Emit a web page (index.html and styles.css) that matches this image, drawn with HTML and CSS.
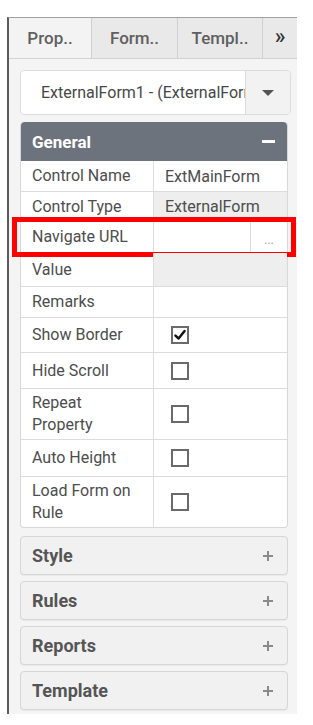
FILE: index.html
```html
<!DOCTYPE html>
<html>
<head>
<meta charset="utf-8">
<link rel="stylesheet" href="styles.css">
</head>
<body>
<div class="frame">
  <div class="tabs">
    <div class="tab tab-active tab-prop">Prop..</div>
    <div class="tab tab-form">Form..</div>
    <div class="tab tab-templ">Templ..</div>
    <div class="tab tab-more">&raquo;</div>
  </div>
  <div class="content">
    <div class="select">
      <div class="select-text">ExternalForm1 - (ExternalForm)</div>
      <div class="select-btn"><span class="caret"></span></div>
    </div>

    <div class="panel panel-open">
      <div class="panel-head">
        <span class="panel-title">General</span>
        <span class="minus"></span>
      </div>
      <div class="rows">
        <div class="row h31"><div class="label">Control Name</div><div class="value">ExtMainForm</div></div>
        <div class="row h30"><div class="label">Control Type</div><div class="value value-gray">ExternalForm</div></div>
        <div class="row h31 row-hl">
          <div class="label">Navigate URL</div>
          <div class="value value-split"><div class="url-input"></div><div class="url-btn">...</div></div>
          <div class="highlight"></div>
        </div>
        <div class="row h34"><div class="label">Value</div><div class="value value-gray"></div></div>
        <div class="row h31"><div class="label">Remarks</div><div class="value"></div></div>
        <div class="row h35"><div class="label">Show Border</div><div class="value"><span class="check checked"><svg viewBox="0 0 16 16" width="16" height="16"><path d="M2.8 8.6 L6.4 12 L13.2 3.4" fill="none" stroke="#111" stroke-width="2.8" stroke-linecap="round" stroke-linejoin="round"/></svg></span></div></div>
        <div class="row h36"><div class="label">Hide Scroll</div><div class="value"><span class="check"></span></div></div>
        <div class="row h51"><div class="label">Repeat<br>Property</div><div class="value"><span class="check"></span></div></div>
        <div class="row h37"><div class="label">Auto Height</div><div class="value"><span class="check"></span></div></div>
        <div class="row h50 row-last"><div class="label">Load Form on<br>Rule</div><div class="value"><span class="check"></span></div></div>
      </div>
    </div>

    <div class="panel panel-closed"><span class="closed-title">Style</span><span class="plus"></span></div>
    <div class="panel panel-closed"><span class="closed-title">Rules</span><span class="plus"></span></div>
    <div class="panel panel-closed"><span class="closed-title">Reports</span><span class="plus"></span></div>
    <div class="panel panel-closed"><span class="closed-title">Template</span><span class="plus"></span></div>
  </div>
</div>
</body>
</html>
```
FILE: styles.css
```css
html, body {
  margin: 0;
  padding: 0;
  background: #ffffff;
}
body {
  font-family: Roboto, "Liberation Sans", sans-serif;
  color: #4d4d4d;
  width: 313px;
  height: 725px;
  overflow: hidden;
}
.frame {
  margin-top: 17px;
  margin-left: 7px;
  width: 288px;
  height: 696px;
  border-left: 2px solid #5a5a5a;
  border-top: 1px solid #a0a0a0;
  background: #f4f4f4;
}
.tabs {
  display: flex;
  height: 40px;
  border-bottom: 1px solid #d2d2d2;
  background: #e9e9e9;
}
.tab {
  box-sizing: border-box;
  display: flex;
  align-items: center;
  justify-content: center;
  font-size: 17px;
  font-weight: 500;
  color: #5f5f5f;
  border-right: 1px solid #d0d0d0;
}
.tab-active { background: #f3f3f3; }
.tab-prop { width: 83px; }
.tab-form { width: 86px; }
.tab-templ { width: 85px; }
.tab-more { width: 34px; border-right: none; font-size: 22px; color: #333; padding-bottom: 3px; }

.content {
  padding: 11px 6px 0 11px;
  display: flex;
  flex-direction: column;
}
.select {
  display: flex;
  height: 45px;
  box-sizing: border-box;
  border: 1px solid #dcdcdc;
  border-radius: 4px;
  background: #fff;
  overflow: hidden;
}
.select-text {
  width: 224px;
  padding-left: 20px;
  box-sizing: border-box;
  white-space: nowrap;
  overflow: hidden;
  font-size: 16px;
  line-height: 43px;
  color: #474747;
}
.select-btn {
  flex: 1;
  border-left: 1px solid #dcdcdc;
  background: #f2f2f2;
  display: flex;
  align-items: center;
  justify-content: center;
}
.caret {
  width: 0;
  height: 0;
  border-left: 6px solid transparent;
  border-right: 6px solid transparent;
  border-top: 6px solid #555;
}

.panel {
  margin-right: 3px;
  border-radius: 4px;
}
.panel-open {
  margin-top: 7px;
  border: 1px solid #d8d8d8;
  border-top: none;
  background: #fff;
}
.panel-head {
  height: 39px;
  background: #6d737d;
  border-radius: 4px 4px 0 0;
  display: flex;
  align-items: center;
  justify-content: space-between;
  padding: 0 12px 0 11px;
}
.panel-title {
  color: #fff;
  font-size: 17px;
  font-weight: 700;
}
.minus {
  width: 13px;
  height: 3px;
  background: #fff;
}
.rows {
  display: flex;
  flex-direction: column;
}
.row {
  display: grid;
  grid-template-columns: 133px 1fr;
  border-bottom: 1px solid #dcdcdc;
  box-sizing: border-box;
  position: relative;
}
.row-last { border-bottom: none; }
.h30 { height: 30px; }
.h31 { height: 31px; }
.h34 { height: 34px; }
.h35 { height: 35px; }
.h36 { height: 36px; }
.h37 { height: 37px; }
.h50 { height: 50px; }
.h51 { height: 51px; }
.label {
  padding-left: 11px;
  border-right: 1px solid #dcdcdc;
  font-size: 16px;
  line-height: 22px;
  display: flex;
  align-items: center;
  color: #4d4d4d;
}
.value {
  padding-left: 11px;
  font-size: 16px;
  display: flex;
  align-items: center;
  color: #4d4d4d;
}
.value-gray { background: #eeeeee; }
.value-split {
  padding-left: 0;
  display: grid;
  grid-template-columns: 96px 1fr;
  align-items: stretch;
}
.url-btn {
  border-left: 1px solid #dcdcdc;
  color: #9a9a9a;
  font-size: 12px;
  display: flex;
  align-items: flex-end;
  justify-content: center;
  padding-bottom: 5px;
}
.highlight {
  position: absolute;
  left: -9px;
  right: -9px;
  top: -5px;
  bottom: -5px;
  border: 5px solid #ff0000;
  pointer-events: none;
}
.check {
  margin-left: 6px;
  width: 18px;
  height: 18px;
  box-sizing: border-box;
  border: 2px solid #6a6a6a;
  background: #fff;
  display: flex;
  align-items: center;
  justify-content: center;
}

.panel-closed {
  height: 39px;
  box-sizing: border-box;
  border: 1px solid #d6d6d6;
  background: #f1f1f1;
  box-shadow: 0 1px 1px rgba(0,0,0,0.05);
  display: flex;
  align-items: center;
  justify-content: space-between;
  padding: 0 14px 0 11px;
  margin-top: 6px;
}
.panel-open + .panel-closed { margin-top: 8px; }
.closed-title {
  font-size: 18px;
  font-weight: 700;
  color: #555;
}
.plus {
  position: relative;
  width: 10px;
  height: 10px;
}
.plus::before, .plus::after {
  content: "";
  position: absolute;
  background: #8a8a8a;
}
.plus::before { left: 0; right: 0; top: 4px; height: 2px; }
.plus::after { top: 0; bottom: 0; left: 4px; width: 2px; }
```
